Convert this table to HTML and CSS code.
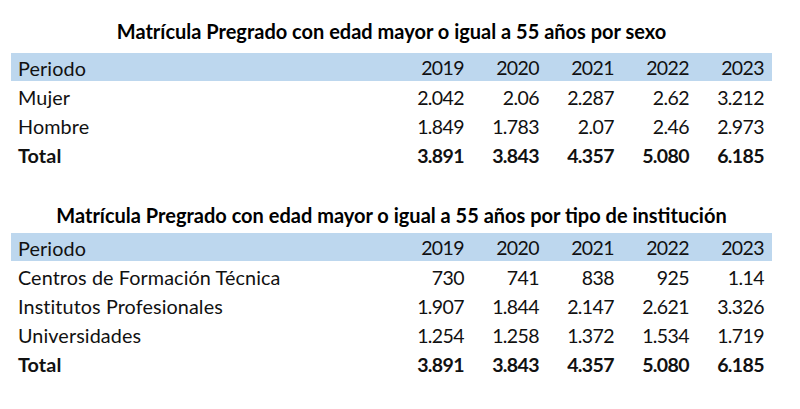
FILE: index.html
```html
<!DOCTYPE html>
<html lang="es">
<head>
<meta charset="utf-8">
<title>Matrícula Pregrado 55 años</title>
<link rel="stylesheet" href="styles.css">
</head>
<body>
<main class="page">
  <section class="block block-sexo">
    <h2 class="title">Matrícula Pregrado con edad mayor o igual a 55 años por sexo</h2>
    <div class="table">
      <div class="row head"><span class="label">Periodo</span><span>2019</span><span>2020</span><span>2021</span><span>2022</span><span>2023</span></div>
      <div class="row"><span class="label">Mujer</span><span>2.042</span><span>2.06</span><span>2.287</span><span>2.62</span><span>3.212</span></div>
      <div class="row"><span class="label">Hombre</span><span>1.849</span><span>1.783</span><span>2.07</span><span>2.46</span><span>2.973</span></div>
      <div class="row total"><span class="label">Total</span><span>3.891</span><span>3.843</span><span>4.357</span><span>5.080</span><span>6.185</span></div>
    </div>
  </section>
  <section class="block block-tipo">
    <h2 class="title">Matrícula Pregrado con edad mayor o igual a 55 años por tipo de institución</h2>
    <div class="table">
      <div class="row head"><span class="label">Periodo</span><span>2019</span><span>2020</span><span>2021</span><span>2022</span><span>2023</span></div>
      <div class="row"><span class="label">Centros de Formación Técnica</span><span>730</span><span>741</span><span>838</span><span>925</span><span>1.14</span></div>
      <div class="row"><span class="label">Institutos Profesionales</span><span>1.907</span><span>1.844</span><span>2.147</span><span>2.621</span><span>3.326</span></div>
      <div class="row"><span class="label">Universidades</span><span>1.254</span><span>1.258</span><span>1.372</span><span>1.534</span><span>1.719</span></div>
      <div class="row total"><span class="label">Total</span><span>3.891</span><span>3.843</span><span>4.357</span><span>5.080</span><span>6.185</span></div>
    </div>
  </section>
</main>
</body>
</html>
```

FILE: styles.css
```css
html, body {
  margin: 0;
  padding: 0;
  background: #ffffff;
}

.page {
  width: 761px;
  margin-left: 11px;
  font-family: Lato, "Open Sans", sans-serif;
  color: #111111;
}

.title {
  margin: 0;
  font-size: 20px;
  font-weight: 700;
  text-align: center;
  line-height: 24px;
  color: #000000;
}

.block-sexo {
  padding-top: 19px;
}

.block-sexo .title {
  margin-bottom: 10px;
}

.block-tipo {
  padding-top: 35px;
}

.block-tipo .title {
  margin-bottom: 6px;
}

.table {
  display: flex;
  flex-direction: column;
}

.row {
  box-sizing: border-box;
  display: grid;
  grid-template-columns: 1fr repeat(5, 75px);
  height: 29px;
  padding: 4px 8px 0 7px;
  line-height: 25px;
  font-size: 19.5px;
}

.row span {
  text-align: right;
  white-space: nowrap;
  letter-spacing: -0.6px;
}

.row .label {
  text-align: left;
  letter-spacing: 0.1px;
  font-size: 19.8px;
}

.head {
  background: #bdd7ee;
  height: 28px;
  padding-top: 2px;
  line-height: 26px;
}

.total {
  font-weight: 700;
}
```
